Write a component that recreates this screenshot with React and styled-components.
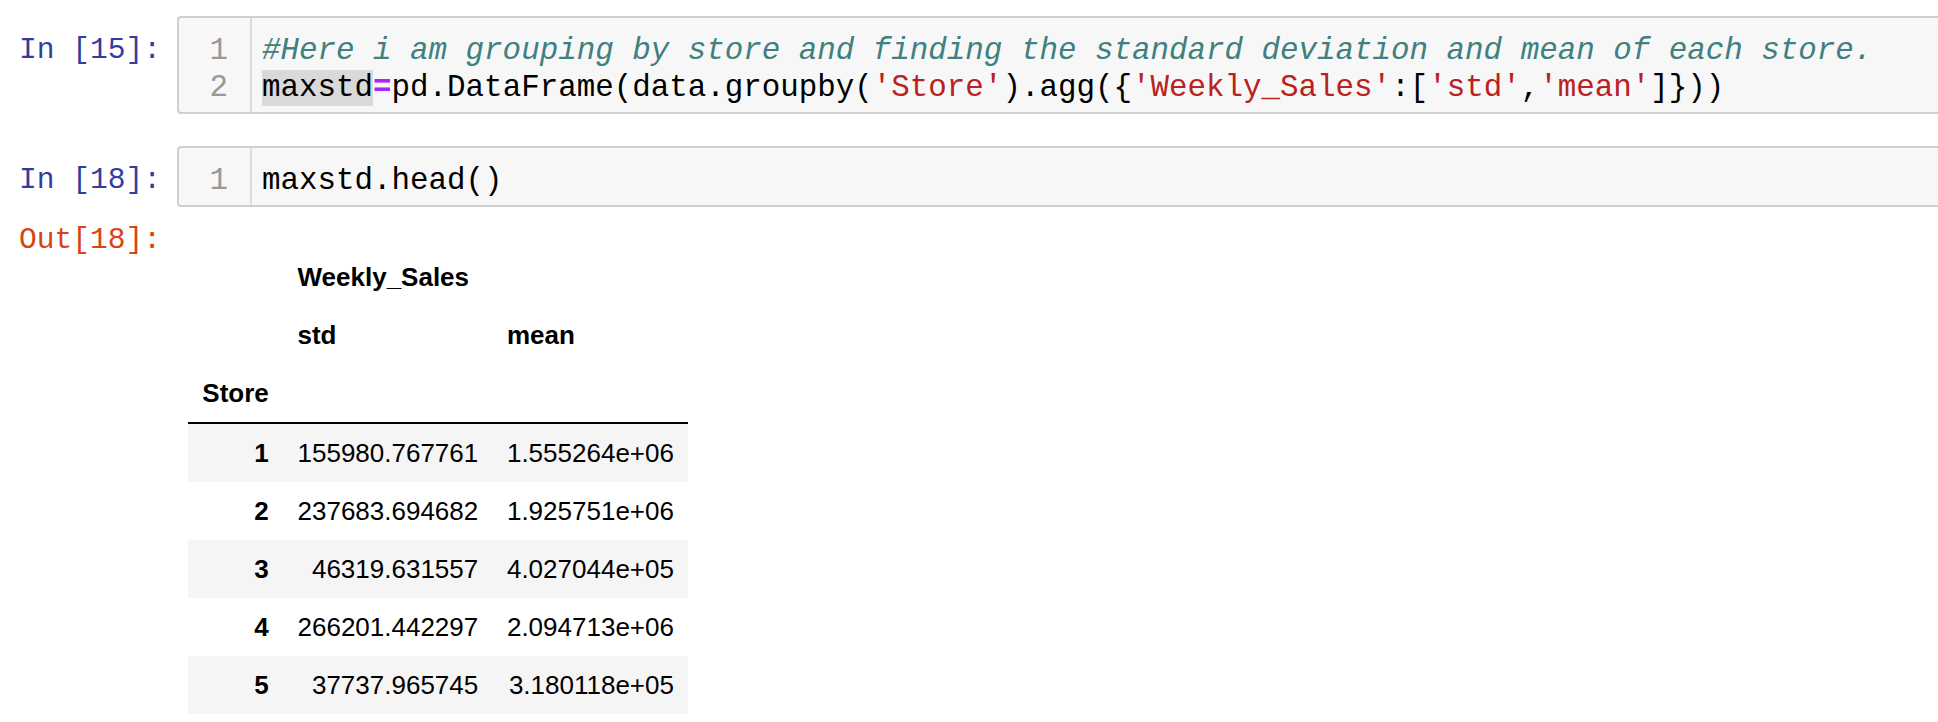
import React from "react";
import styled, { createGlobalStyle } from "styled-components";

const GlobalStyle = createGlobalStyle`
  html, body {
    margin: 0;
    padding: 0;
    background: #ffffff;
  }
  body {
    font-family: "Liberation Sans", Arial, sans-serif;
    overflow: hidden;
  }
`;

const Notebook = styled.div`
  display: flex;
  flex-direction: column;
  padding-top: 16px;
`;

const CellRow = styled.div`
  display: flex;
  align-items: flex-start;
  margin-bottom: ${(p) => p.$gap || 0}px;
`;

const Prompt = styled.div`
  flex: 0 0 177px;
  box-sizing: border-box;
  padding-right: 16px;
  padding-top: ${(p) => (p.$out ? 15 : 16)}px;
  text-align: right;
  font-family: "Liberation Mono", "DejaVu Sans Mono", monospace;
  font-size: 29.6px;
  line-height: 37px;
  white-space: pre;
  color: ${(p) => (p.$out ? "#D84315" : "#303F9F")};
`;

const InputArea = styled.div`
  flex: 1;
  display: flex;
  align-items: stretch;
  background: #f7f7f7;
  border: 2px solid #cfcfcf;
  border-right: none;
  border-radius: 4px 0 0 4px;
  font-family: "Liberation Mono", "DejaVu Sans Mono", monospace;
  font-size: 30.85px;
  line-height: 37px;
`;

const Gutter = styled.div`
  flex: 0 0 73px;
  box-sizing: border-box;
  padding: 14px 22px 6px 0;
  border-right: 2px solid #dddddd;
  text-align: right;
  color: #999999;
`;

const LineNo = styled.div`
  height: 37px;
`;

const Code = styled.div`
  flex: 1;
  padding: 14px 8px 6px 10px;
  color: #000000;
`;

const CodeLine = styled.div`
  height: 37px;
  white-space: pre;
`;

const Comment = styled.span`
  color: #408080;
  font-style: italic;
`;

const Str = styled.span`
  color: #ba2121;
`;

const Op = styled.span`
  color: #aa22ff;
  font-weight: bold;
`;

const Match = styled.span`
  display: inline-block;
  background: #d9d9d9;
  line-height: 36px;
`;

const OutputContent = styled.div`
  flex: 1;
  padding-left: 11px;
  padding-top: 41px;
`;

const Table = styled.table`
  border-collapse: separate;
  border-spacing: 0;
  font-family: "Liberation Sans", Arial, sans-serif;
  font-size: 26px;
  color: #000000;
`;

const Row = styled.tr`
  background: ${(p) => (p.$striped ? "#f5f5f5" : "transparent")};
`;

const HeadCell = styled.th`
  padding: 13px 14.35px;
  line-height: 32px;
  font-weight: bold;
  text-align: ${(p) => p.$align || "left"};
  vertical-align: middle;
  white-space: nowrap;
  border-bottom: ${(p) => (p.$divider ? "2px solid #000000" : "none")};
`;

const DataCell = styled.td`
  padding: 13px 14.35px;
  line-height: 32px;
  text-align: right;
  vertical-align: middle;
  white-space: nowrap;
`;

const rows = [
  ["1", "155980.767761", "1.555264e+06"],
  ["2", "237683.694682", "1.925751e+06"],
  ["3", "46319.631557", "4.027044e+05"],
  ["4", "266201.442297", "2.094713e+06"],
  ["5", "37737.965745", "3.180118e+05"],
];

export default function App() {
  return (
    <>
      <GlobalStyle />
      <Notebook>
        <CellRow $gap={32}>
          <Prompt>In [15]:</Prompt>
          <InputArea>
            <Gutter>
              <LineNo>1</LineNo>
              <LineNo>2</LineNo>
            </Gutter>
            <Code>
              <CodeLine>
                <Comment>
                  #Here i am grouping by store and finding the standard deviation and mean of each store.
                </Comment>
              </CodeLine>
              <CodeLine>
                <Match>maxstd</Match>
                <Op>=</Op>
                pd.DataFrame(data.groupby(<Str>'Store'</Str>).agg({"{"}
                <Str>'Weekly_Sales'</Str>:[<Str>'std'</Str>,<Str>'mean'</Str>]{"}"}))
              </CodeLine>
            </Code>
          </InputArea>
        </CellRow>
        <CellRow>
          <Prompt>In [18]:</Prompt>
          <InputArea>
            <Gutter>
              <LineNo>1</LineNo>
            </Gutter>
            <Code>
              <CodeLine>maxstd.head()</CodeLine>
            </Code>
          </InputArea>
        </CellRow>
        <CellRow>
          <Prompt $out>Out[18]:</Prompt>
          <OutputContent>
            <Table>
              <thead>
                <tr>
                  <HeadCell />
                  <HeadCell colSpan={2}>Weekly_Sales</HeadCell>
                </tr>
                <tr>
                  <HeadCell />
                  <HeadCell>std</HeadCell>
                  <HeadCell>mean</HeadCell>
                </tr>
                <tr>
                  <HeadCell $divider $align="right">
                    Store
                  </HeadCell>
                  <HeadCell $divider />
                  <HeadCell $divider />
                </tr>
              </thead>
              <tbody>
                {rows.map((r, i) => (
                  <Row key={r[0]} $striped={i % 2 === 0}>
                    <HeadCell $align="right">{r[0]}</HeadCell>
                    <DataCell>{r[1]}</DataCell>
                    <DataCell>{r[2]}</DataCell>
                  </Row>
                ))}
              </tbody>
            </Table>
          </OutputContent>
        </CellRow>
      </Notebook>
    </>
  );
}
